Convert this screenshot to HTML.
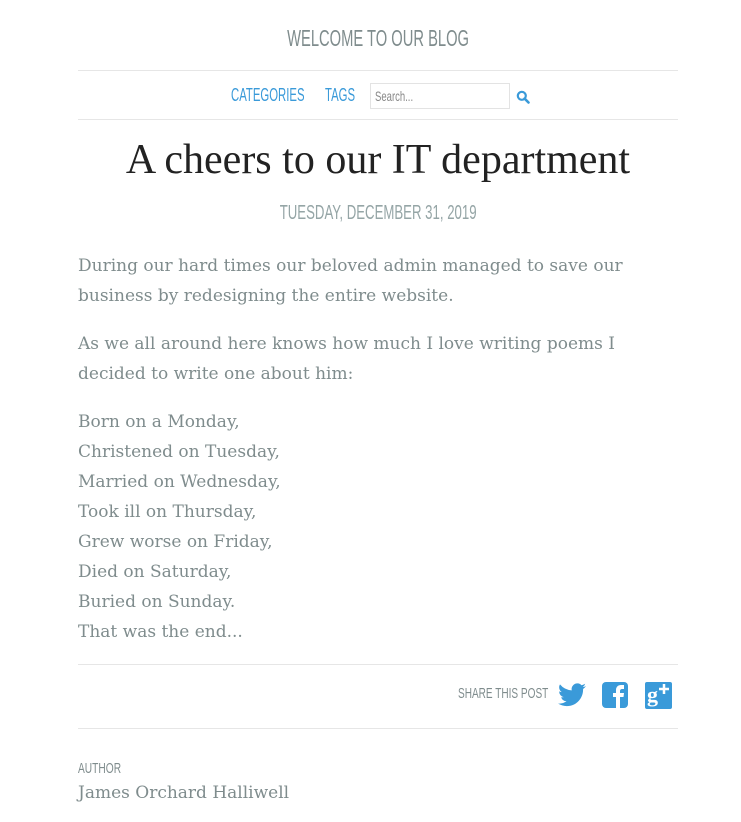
<!DOCTYPE html>
<html><head><meta charset="utf-8"><style>
body{margin:0;background:#fff;font-family:"Liberation Serif",serif;}
.c{position:absolute;left:78px;width:600px;}
.n{font-family:"Liberation Sans",sans-serif;}
.s{display:inline-block;white-space:nowrap;}
.hr{position:absolute;left:78px;width:600px;height:1px;background:#e6e6e6;}
p{margin:0;}
.b{font-family:"DejaVu Serif",serif;font-size:17px;color:#7f8c8d;line-height:30px;}
</style></head><body>
<div class="c n" style="top:25px;text-align:center;font-size:23px;color:#7f8c8d;"><span class="s" style="transform:scaleX(0.64)">WELCOME TO OUR BLOG</span></div>
<div class="hr" style="top:70px"></div>
<div class="n" style="position:absolute;left:231px;top:85px;font-size:18px;color:#3a9ad9;"><span class="s" style="transform:scaleX(0.63);transform-origin:0 0">CATEGORIES</span></div>
<div class="n" style="position:absolute;left:325px;top:85px;font-size:18px;color:#3a9ad9;"><span class="s" style="transform:scaleX(0.63);transform-origin:0 0">TAGS</span></div>
<div class="n" style="position:absolute;left:370px;top:83px;width:138px;height:24px;border:1px solid #e3e3e3;font-size:14px;color:#888;line-height:24px;"><span class="s" style="transform:scaleX(0.68);transform-origin:0 0;margin-left:4px">Search...</span></div>
<svg style="position:absolute;left:516px;top:90px" width="14" height="14" viewBox="0 0 14 14"><circle cx="5.8" cy="5.8" r="4" fill="none" stroke="#3a9ad9" stroke-width="2.2"/><path d="M8.6 8.6L12.5 12.5" stroke="#3a9ad9" stroke-width="2.6" stroke-linecap="round"/></svg>
<div class="hr" style="top:119px"></div>
<div class="c" style="top:136px;text-align:center;font-size:42px;color:#222;">A cheers to our IT department</div>
<div class="c n" style="top:202px;text-align:center;font-size:20px;color:#95a5a6;"><span class="s" style="transform:scaleX(0.66)">TUESDAY, DECEMBER 31, 2019</span></div>
<div class="c b" style="top:251px;">
<p>During our hard times our beloved admin managed to save our business by redesigning the entire website.</p>
<p style="margin-top:18px">As we all around here knows how much I love writing poems I decided to write one about him:</p>
<p style="margin-top:18px">Born on a Monday,<br>Christened on Tuesday,<br>Married on Wednesday,<br>Took ill on Thursday,<br>Grew worse on Friday,<br>Died on Saturday,<br>Buried on Sunday.<br>That was the end...</p>
</div>
<div class="hr" style="top:664px"></div>
<div class="n" style="position:absolute;left:458px;top:685px;font-size:15px;color:#7f8c8d;"><span class="s" style="transform:scaleX(0.67);transform-origin:0 0">SHARE THIS POST</span></div>
<svg style="position:absolute;left:558px;top:683px" width="28" height="24" viewBox="0 0 24 20"><path d="M24 2.4a9.8 9.8 0 0 1-2.8.8A4.9 4.9 0 0 0 23.3.4a9.9 9.9 0 0 1-3.1 1.2A4.9 4.9 0 0 0 11.8 6 14 14 0 0 1 1.7.9a4.9 4.9 0 0 0 1.500 6.6 4.9 4.9 0 0 1-2.2-.6v.1a4.9 4.9 0 0 0 3.900 4.8 4.9 4.9 0 0 1-2.2.1 4.9 4.9 0 0 0 4.600 3.4A9.9 9.9 0 0 1 0 17.3 14 14 0 0 0 7.5 19.5c9.1 0 14-7.5 14-14v-.6A10 10 0 0 0 24 2.4z" fill="#3a9ad9"/></svg>
<svg style="position:absolute;left:602px;top:682px" width="26" height="26" viewBox="0 0 26 26"><rect width="26" height="26" rx="4" fill="#3a9ad9"/><path d="M14 26V15h-3v-4h3V8c0-3 2-5 5-5h3v4h-2c-1 0-2 .5-2 2v2h4l-.5 4H18v11z" fill="#fff"/></svg>
<svg style="position:absolute;left:645px;top:682px" width="27" height="27" viewBox="0 0 27 27"><rect width="27" height="27" rx="2" fill="#3a9ad9"/><text x="2" y="20" font-family="Liberation Serif" font-weight="bold" font-size="22" fill="#fff">g</text><path d="M19 2v10M14 7h10" stroke="#fff" stroke-width="2.5"/></svg>
<div class="hr" style="top:728px"></div>
<div class="n" style="position:absolute;left:78px;top:760px;font-size:15px;color:#7f8c8d;"><span class="s" style="transform:scaleX(0.68);transform-origin:0 0">AUTHOR</span></div>
<div style="position:absolute;left:78px;top:783px;color:#7f8c8d;font-family:'DejaVu Serif',serif;font-size:17px;">James Orchard Halliwell</div>
</body></html>
